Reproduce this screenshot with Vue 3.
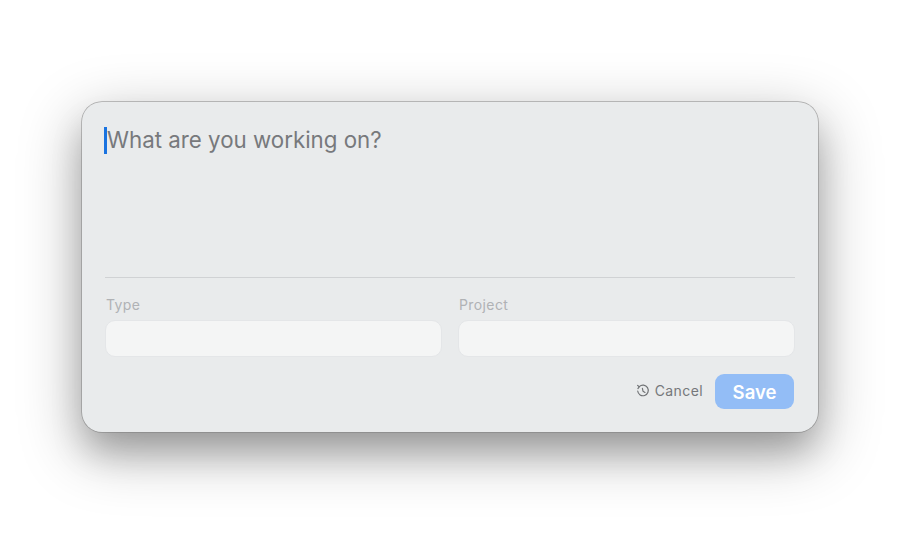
<template>
  <div class="page">
    <div class="card">
      <div class="editor">
        <span class="caret"></span>
        <span class="placeholder">What are you working on?</span>
      </div>
      <div class="divider"></div>
      <div class="fields">
        <div class="field">
          <label class="label">Type</label>
          <div class="input"></div>
        </div>
        <div class="field">
          <label class="label">Project</label>
          <div class="input"></div>
        </div>
      </div>
      <div class="actions">
        <button class="cancel">
          <svg class="icon" width="14" height="14" viewBox="0 0 14 14" fill="none" stroke="#6f7174" stroke-width="1.15" stroke-linecap="round" stroke-linejoin="round">
            <path d="M3.3 2.6A5.3 5.3 0 1 1 1.7 7" />
            <path d="M1.6 1.4 3.2 2.8 1.9 4.6" />
            <path d="M6.4 4.4 7 7.2 9 8.4" />
          </svg>
          <span>Cancel</span>
        </button>
        <button class="save">Save</button>
      </div>
    </div>
  </div>
</template>

<script setup>
</script>

<style>
html, body { margin: 0; background: #fff; }
</style>

<style scoped>
.page {
  width: 900px;
  height: 541px;
  box-sizing: border-box;
  padding: 102px 82px 0;
  overflow: hidden;
  background: #fff;
  font-family: Inter, "Liberation Sans", sans-serif;
}
.card {
  width: 736px;
  height: 330px;
  box-sizing: border-box;
  padding: 25px 23px 0;
  border-radius: 20px;
  background: #e9ebec;
  box-shadow: 0 0 0 0.75px rgba(120, 120, 120, 0.6), 0 22px 34px -4px rgba(0, 0, 0, 0.22), 0 18px 60px 4px rgba(0, 0, 0, 0.28);
}
.editor {
  height: 150px;
  display: flex;
  align-items: flex-start;
  box-sizing: border-box;
}
.caret {
  width: 2.5px;
  height: 27px;
  margin-left: -1px;
  margin-right: 0.5px;
  background: #1a73e0;
  flex: none;
}
.placeholder {
  font-size: 22.3px;
  line-height: 25px;
  color: #77797c;
}
.divider {
  height: 1px;
  background: #d0d2d4;
}
.fields {
  display: grid;
  grid-template-columns: 337px 337px;
  gap: 16px;
  margin-top: 18px;
}
.field {
  display: flex;
  flex-direction: column;
}
.label {
  font-size: 14px;
  line-height: 17px;
  letter-spacing: 0.4px;
  color: #b0b2b5;
  margin-left: 1px;
  margin-bottom: 7px;
}
.input {
  height: 37px;
  box-sizing: border-box;
  border: 1px solid #e4e6e8;
  border-radius: 10px;
  background: #f4f5f5;
}
.actions {
  display: flex;
  justify-content: flex-end;
  align-items: center;
  gap: 12px;
  margin-top: 17px;
  margin-right: 1px;
}
.cancel {
  display: flex;
  align-items: center;
  gap: 5px;
  border: 0;
  padding: 0;
  margin-bottom: 2px;
  background: none;
  font-family: inherit;
  font-size: 14px;
  letter-spacing: 0.4px;
  color: #76787b;
}
.icon {
  display: block;
}
.save {
  width: 79px;
  height: 35px;
  border: 0;
  border-radius: 9px;
  background: #93bdf6;
  color: #fff;
  font-family: inherit;
  font-size: 18.5px;
  font-weight: 600;
  padding: 0;
}
</style>
